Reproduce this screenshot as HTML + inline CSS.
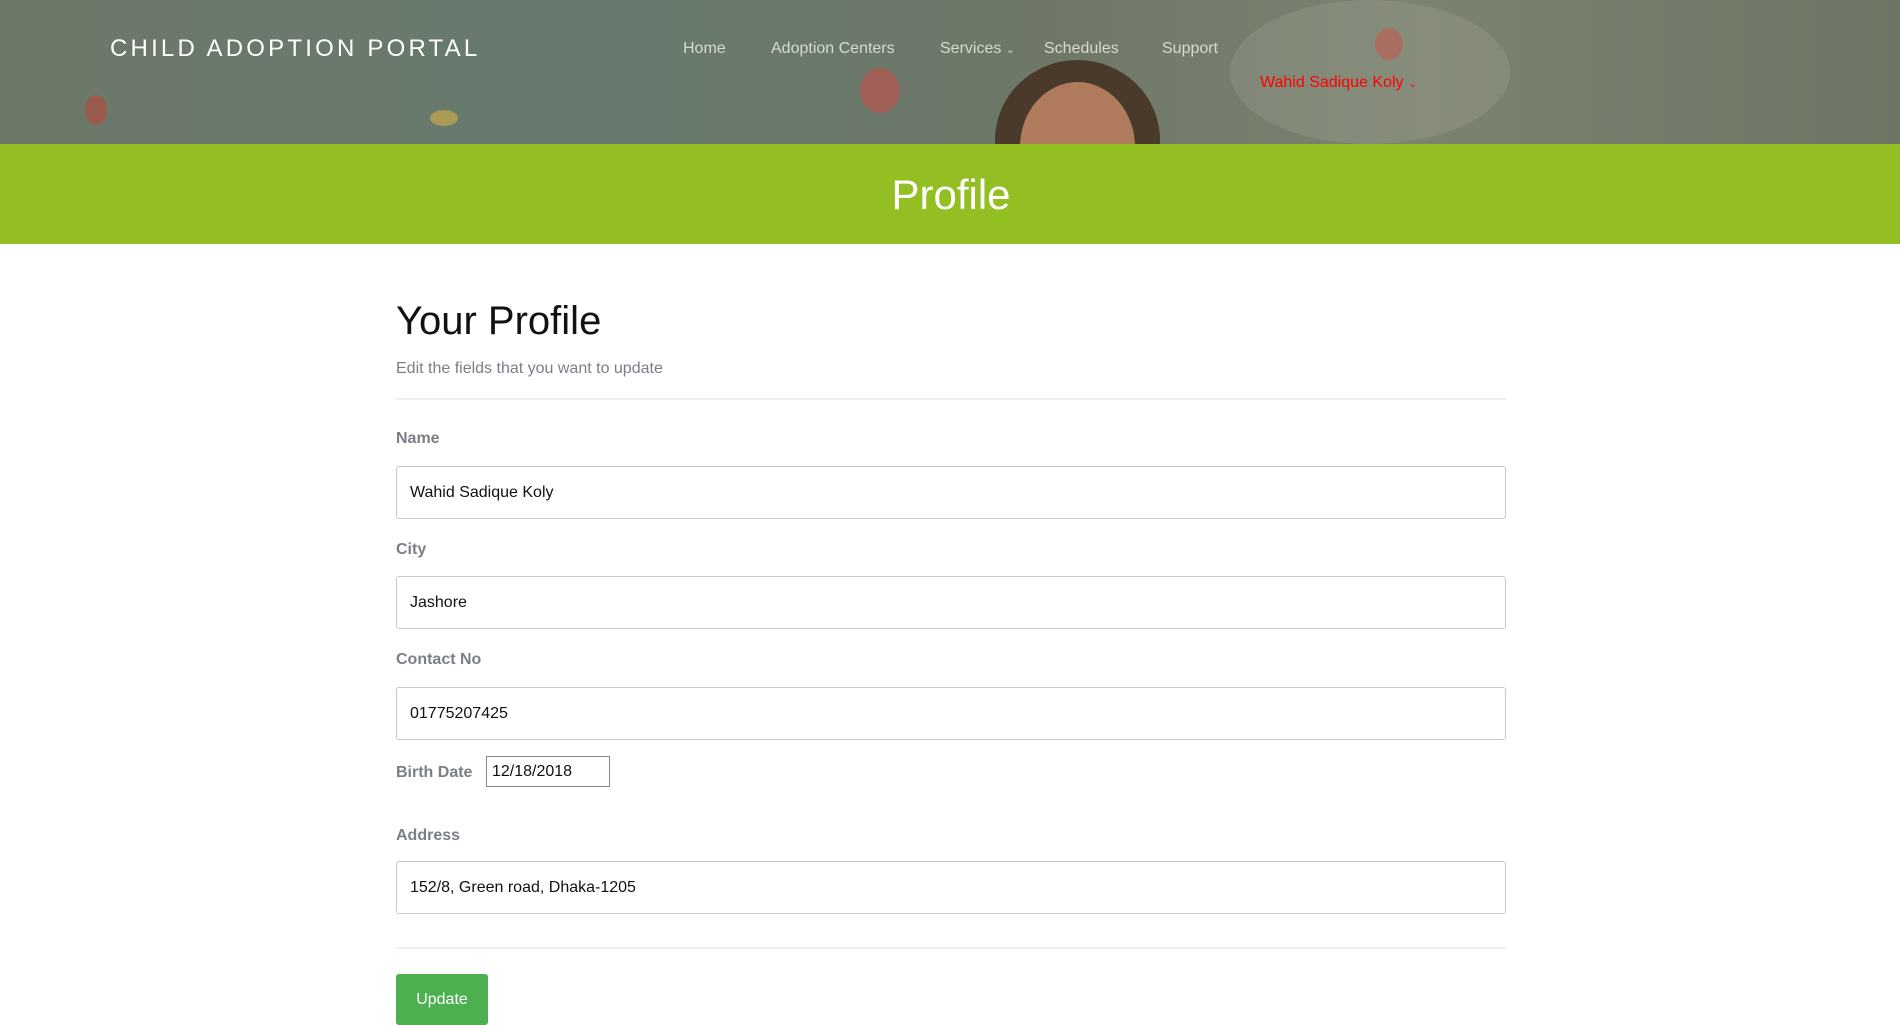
<!DOCTYPE html>
<html><head><meta charset="utf-8"><style>
*{box-sizing:border-box;margin:0;padding:0}
body{width:1900px;height:1025px;overflow:hidden;background:#fff;font-family:"Liberation Sans",sans-serif;position:relative}
.hdr{position:absolute;left:0;top:0;width:1900px;height:144px;background:linear-gradient(90deg,#6e7868 0%,#667a6e 30%,#6f7868 55%,#7c8270 75%,#6f7564 100%);overflow:hidden}
.dot{position:absolute;border-radius:50%}
.band{position:absolute;left:0;top:144px;width:1900px;height:100px;background:#93bf23}
.a{position:absolute;white-space:nowrap}
.brand{left:110px;top:35px;color:#fff;font-size:24px;letter-spacing:3.2px}
.nav{top:40px;color:#d6dad0;font-size:16px}
.lbl{left:396px;color:#7a7f86;font-size:16px;font-weight:bold}
.inp{position:absolute;left:396px;width:1110px;height:53px;border:1px solid #c9c9c9;border-radius:3px;font-size:16px;padding:0 13px;line-height:51px;color:#111}
.hr{position:absolute;left:396px;width:1110px;height:2px;background:#eee}
</style></head><body>
<div class="hdr">
<div class="dot" style="left:85px;top:95px;width:22px;height:30px;background:#9a5a4c"></div>
<div class="dot" style="left:430px;top:110px;width:28px;height:16px;background:#a99a55"></div>
<div class="dot" style="left:860px;top:68px;width:40px;height:45px;background:#a06057"></div>
<div class="dot" style="left:1375px;top:28px;width:28px;height:32px;background:#a55e52"></div>
<div class="dot" style="left:995px;top:60px;width:165px;height:160px;background:#4a3a2c"></div>
<div class="dot" style="left:1020px;top:82px;width:115px;height:130px;background:#b07b5c"></div>
<div class="dot" style="left:1230px;top:0;width:280px;height:144px;background:rgba(200,200,185,.15)"></div>
</div>
<div class="band"></div>
<div class="a brand">CHILD ADOPTION PORTAL</div>
<div class="a nav" style="left:683px">Home</div>
<div class="a nav" style="left:771px">Adoption Centers</div>
<div class="a nav" style="left:940px">Services <span style="font-size:11px">&#8964;</span></div>
<div class="a nav" style="left:1044px">Schedules</div>
<div class="a nav" style="left:1162px">Support</div>
<div class="a" style="left:1260px;top:74px;color:#f00;font-size:16px">Wahid Sadique Koly <span style="font-size:11px">&#8964;</span></div>
<div class="a" style="left:0;width:1902px;text-align:center;top:171px;color:#fff;font-size:42px">Profile</div>
<div class="a" style="left:396px;top:299px;color:#111;font-size:40px">Your Profile</div>
<div class="a" style="left:396px;top:360px;color:#7a7f86;font-size:16px">Edit the fields that you want to update</div>
<div class="hr" style="top:398px"></div>
<div class="a lbl" style="top:430px">Name</div>
<div class="inp" style="top:466px">Wahid Sadique Koly</div>
<div class="a lbl" style="top:541px">City</div>
<div class="inp" style="top:576px">Jashore</div>
<div class="a lbl" style="top:651px">Contact No</div>
<div class="inp" style="top:687px">01775207425</div>
<div class="a lbl" style="top:764px">Birth Date</div>
<div style="position:absolute;left:486px;top:756px;width:124px;height:31px;border:1px solid #888;font-size:16px;padding-left:5px;line-height:29px;color:#111">12/18/2018</div>
<div class="a lbl" style="top:827px">Address</div>
<div class="inp" style="top:861px">152/8, Green road, Dhaka-1205</div>
<div class="hr" style="top:947px"></div>
<div style="position:absolute;left:396px;top:974px;width:92px;height:51px;background:#4caf50;border-radius:3px;color:#fff;font-size:16px;text-align:center;line-height:51px">Update</div>
</body></html>
